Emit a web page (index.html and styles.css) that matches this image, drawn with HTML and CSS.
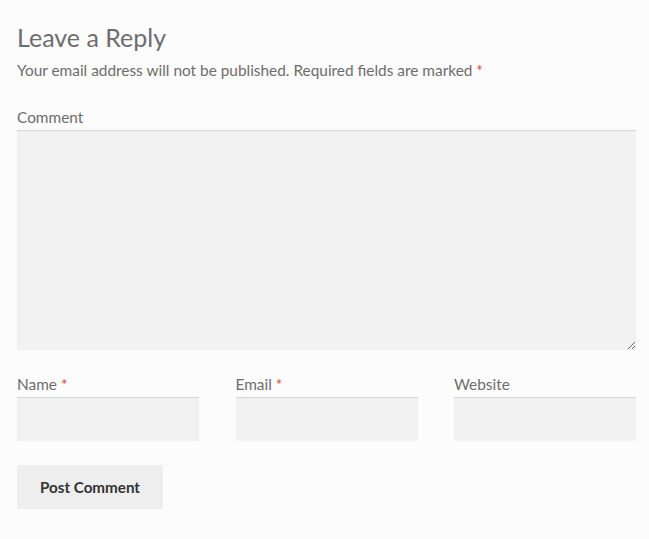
FILE: index.html
```html
<!DOCTYPE html>
<html lang="en">
<head>
<meta charset="utf-8">
<title>Leave a Reply</title>
<link rel="stylesheet" href="styles.css">
</head>
<body>
<div class="respond">
  <h3 class="reply-title">Leave a Reply</h3>
  <form class="comment-form">
    <p class="notes">Your email address will not be published. Required fields are marked <span class="required">*</span></p>
    <div class="field">
      <label class="label" for="comment">Comment</label>
      <textarea id="comment" class="textarea"></textarea>
    </div>
    <div class="row">
      <div class="field">
        <label class="label" for="author">Name <span class="required">*</span></label>
        <input id="author" class="input" type="text">
      </div>
      <div class="field">
        <label class="label" for="email">Email <span class="required">*</span></label>
        <input id="email" class="input" type="email">
      </div>
      <div class="field">
        <label class="label" for="url">Website</label>
        <input id="url" class="input" type="url">
      </div>
    </div>
    <div class="submit-row">
      <button type="button" class="submit">Post Comment</button>
    </div>
  </form>
</div>
</body>
</html>
```
FILE: styles.css
```css
html, body {
  margin: 0;
  padding: 0;
  background: #fcfcfc;
}
body {
  font-family: "Lato", "Liberation Sans", sans-serif;
  color: #6d6d6d;
  font-size: 15.4px;
}
.respond {
  padding: 20px 13px 0 17px;
}
.reply-title {
  margin: 0 0 3px;
  font-size: 25px;
  line-height: 34px;
  font-weight: 400;
  color: #6d6d6d;
}
.comment-form {
  display: flex;
  flex-direction: column;
}
.notes {
  margin: 0 0 21px;
  line-height: 26px;
}
.required {
  color: #e2401c;
}
.field {
  display: flex;
  flex-direction: column;
}
.label {
  line-height: 26px;
}
.textarea, .input {
  box-sizing: border-box;
  border: 0;
  margin: 0;
  background: #f2f2f2;
  box-shadow: inset 0 1px 1px rgba(0, 0, 0, 0.125);
  outline: none;
  font: inherit;
  color: #43454b;
}
.textarea {
  height: 220px;
  resize: vertical;
  width: 100%;
}
.row {
  margin-top: 21px;
  display: grid;
  grid-template-columns: 182px 182px 182px;
  column-gap: 36.5px;
}
.input {
  height: 44px;
  width: 100%;
}
.submit-row {
  margin-top: 24px;
  display: flex;
}
.submit {
  border: 0;
  background: #eeeeee;
  color: #333333;
  font: inherit;
  font-size: 15.2px;
  font-weight: 700;
  height: 44px;
  width: 146px;
  padding: 0;
  cursor: pointer;
}
```
